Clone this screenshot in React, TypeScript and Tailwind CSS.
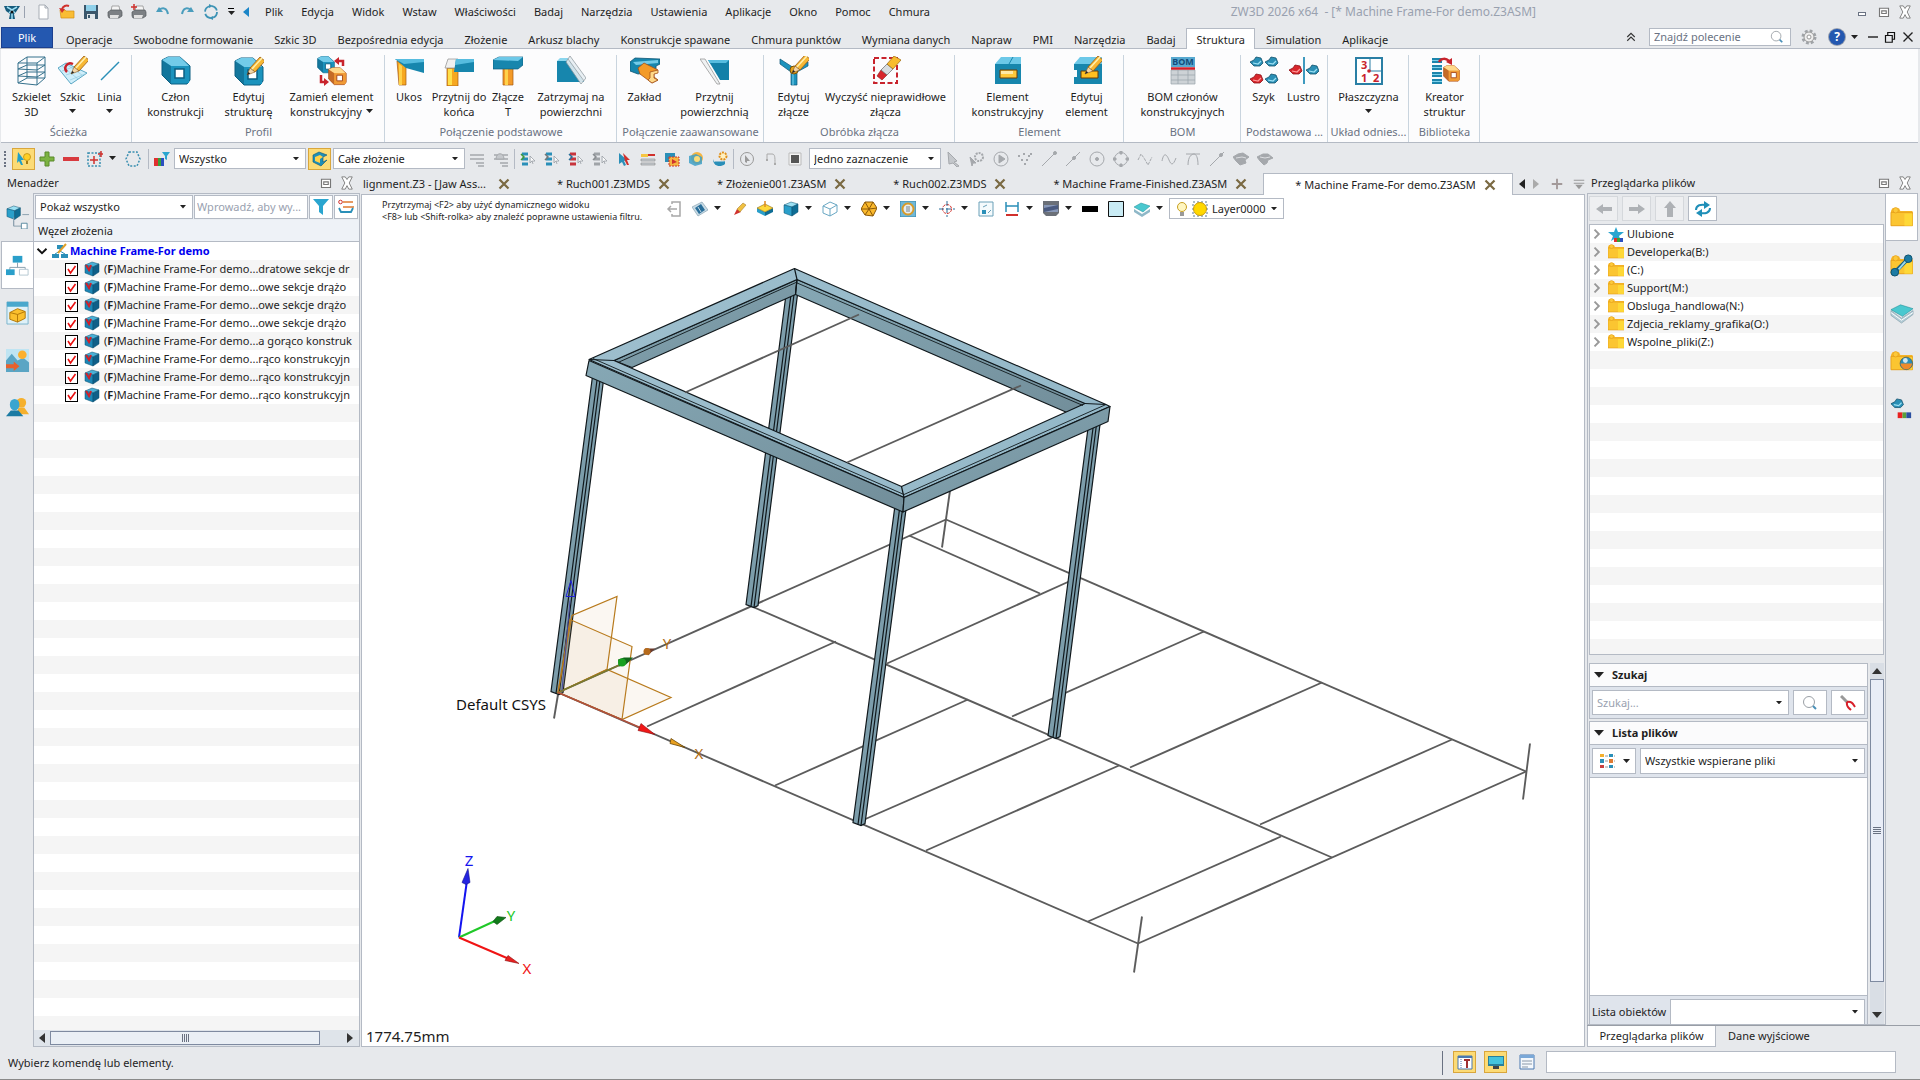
import { ReactNode } from 'react'
import clsx from 'clsx'

type IconProps = { children?: ReactNode; size?: number; className?: string }

// Ribbon drawings use a 30 unit box, toolbar drawings a 16 unit box
function Icon({ children, size = 16, className = 'size-4' }: IconProps) {
  return (
    <svg viewBox={`0 0 ${size} ${size}`} className={clsx('shrink-0', className)} fill="none" aria-hidden="true">
      {children}
    </svg>
  )
}

function Big({ children }: { children: ReactNode }) {
  return (
    <Icon size={30} className="size-[30px]">
      {children}
    </Icon>
  )
}

function Caret({ className = 'w-[7px]' }: { className?: string }) {
  return (
    <svg viewBox="0 0 8 5" className={clsx('shrink-0 pointer-events-none', className)} aria-hidden="true">
      <path d="M0 0H8L4 4.5Z" fill="#222" />
    </svg>
  )
}

function Pencil({ x, y }: { x: number; y: number }) {
  return (
    <g transform={`translate(${x} ${y})`}>
      <path d="M3 -7L13 -18L18 -14L8 -3Z" fill="#f7b733" stroke="#9a5b10" strokeWidth=".8" />
      <path d="M4.500 -5.500L15 -17" stroke="#fff0b0" strokeWidth="1.500" />
      <path d="M0 0L3 -7L8 -3Z" fill="#f3d6a8" stroke="#8a5a20" strokeWidth=".6" />
      <path d="M0 0L1.200 -3L3.200 -1.500Z" fill="#222" />
    </g>
  )
}

function BlueTube({ x = 0, y = 0, s = 1, orange = false }: { x?: number; y?: number; s?: number; orange?: boolean }) {
  const [light, mid, dark] = orange ? ['#ffd98a', '#f09a35', '#a3451a'] : ['#72cbe9', '#1b93bd', '#0c5f82']
  return (
    <g transform={`translate(${x} ${y}) scale(${s})`}>
      <path d="M1 4L7 1H19L29 10V24L26 28H10L1 19Z" fill={mid} stroke={dark} strokeWidth="1" />
      <path d="M1 4L7 1H19L28 10H10Z" fill={light} />
      <path d="M1 4L10 10V28L1 19Z" fill={dark} opacity=".55" />
      <path d="M10 10H28V27H10Z" fill={mid} />
      <path d="M14 13H23V22H14Z" fill="#fff" stroke={dark} strokeWidth="1.500" />
    </g>
  )
}

function Blob({ x, y, red = false }: { x: number; y: number; red?: boolean }) {
  return (
    <g transform={`translate(${x} ${y})`}>
      <path d="M0 5L4 3L6 0L11 1L13 6L10 9L4 9Z" fill={red ? '#d8262c' : '#2a8fb5'} stroke={red ? '#8c1218' : '#11506b'} strokeWidth=".8" />
      <path d="M3 6L8 7L11 4" stroke={red ? '#ff9a9a' : '#9be0f3'} strokeWidth="1.200" />
    </g>
  )
}

function Folder() {
  return (
    <>
      <path d="M0 3L1 1H6L7 3H16V14H0Z" fill="#f9b92c" />
      <path d="M0 4H16V14H0Z" fill="#fbc531" stroke="#e39a17" strokeWidth=".6" />
      <path d="M10 5H16V14H10Z" fill="#ffdf3a" opacity=".7" />
      <circle cx="3.500" cy="2.500" r="2" fill="#fcc93a" stroke="#e39a17" strokeWidth=".5" />
    </>
  )
}

function Cube({ x = 0, y = 0, top = '#9be0f3', left = '#2a9fca', right = '#0e6d95' }) {
  return (
    <g transform={`translate(${x} ${y})`} stroke="#0b4f6e" strokeWidth=".5">
      <path d="M1 4L8 1L15 3L9 6Z" fill={top} />
      <path d="M1 4L9 6V15L1 12Z" fill={left} />
      <path d="M9 6L15 3V11L9 15Z" fill={right} />
    </g>
  )
}

function Lens() {
  return (
    <>
      <circle cx="7" cy="7" r="5.500" stroke="#9aa0a6" />
      <path d="M11 11L14 14" stroke="#4a90b8" strokeWidth="2" />
    </>
  )
}

function CloseGlyph() {
  return (
    <Icon className="size-3">
      <path d="M2 2L14 14M14 2L2 14" stroke="#7b6a43" strokeWidth="3" />
    </Icon>
  )
}

// Float and close controls shared by the window and the docked panels
function PanelControls() {
  return (
    <div className="flex items-center gap-2">
      <button aria-label="Odepnij">
        <Icon className="size-3">
          <path d="M2 3H14V14H2Z" stroke="#777" strokeWidth="1.500" fill="#fff" />
          <path d="M5 6.500H11V10H5Z" stroke="#777" strokeWidth="1.500" />
        </Icon>
      </button>
      <button aria-label="Zamknij">
        <Icon className="size-3.5">
          <path d="M2 1H6L8 4L10 1H14L10.500 8L14 15H10L8 11L6 15H2L5.500 8Z" fill="#fff" stroke="#777" />
        </Icon>
      </button>
    </div>
  )
}

type ComboProps = { label: string; options: string[]; className?: string; muted?: boolean }

function Combo({ label, options, className, muted }: ComboProps) {
  return (
    <div className={clsx('flex items-center border border-[#b4bac4] bg-white pr-1.5', className)}>
      <select
        aria-label={label}
        className={clsx('min-w-0 grow appearance-none bg-transparent pl-1 outline-none', muted && 'text-gray-400')}
      >
        {options.map((o) => (
          <option key={o}>{o}</option>
        ))}
      </select>
      <Caret className="w-[6px]" />
    </div>
  )
}

const menu = ['Plik', 'Edycja', 'Widok', 'Wstaw', 'Właściwości', 'Badaj', 'Narzędzia', 'Ustawienia', 'Aplikacje', 'Okno', 'Pomoc', 'Chmura']

const quickIcons: { name: string; art: ReactNode }[] = [
  { name: 'Nowy', art: <path d="M4 1H10L13 4V15H4ZM10 1V4H13" fill="#fff" stroke="#a7adb5" /> },
  {
    name: 'Otwórz',
    art: (
      <>
        <path d="M1 6H6L7 7H15V14H2Z" fill="#f9bd35" stroke="#d48e12" strokeWidth=".7" />
        <path d="M10 2C7 1 4 2 3 5" stroke="#d0312d" strokeWidth="2" />
        <path d="M0 4L6 5L3 9Z" fill="#d0312d" />
      </>
    ),
  },
  {
    name: 'Zapisz',
    art: (
      <>
        <path d="M1 1H15V15H1Z" fill="#3a566b" />
        <path d="M3 1H13V7H3Z" fill="#8fd0ea" />
        <path d="M4 10H12V15H4Z" fill="#dfe6ea" />
        <path d="M5 11H7V14H5Z" fill="#3a566b" />
      </>
    ),
  },
  {
    name: 'Drukuj',
    art: (
      <>
        <path d="M5 2H12L13 7H4Z" fill="#f4f4f4" stroke="#888" strokeWidth=".7" />
        <path d="M1 8L4 6H14L15 8V12L12 14H2L1 12Z" fill="#7c8084" stroke="#55595d" strokeWidth=".7" />
        <path d="M3 11H12L11 14H3Z" fill="#e2e2e2" />
      </>
    ),
  },
  {
    name: 'Drukuj wiele',
    art: (
      <>
        <path d="M5 2H12L13 7H4Z" fill="#f4f4f4" stroke="#888" strokeWidth=".7" />
        <path d="M1 8L4 6H14L15 8V12L12 14H2L1 12Z" fill="#7c8084" stroke="#55595d" strokeWidth=".7" />
        <path d="M3 11H12L11 14H3Z" fill="#e2e2e2" />
        <path d="M3 0V6M0 3H6" stroke="#d0312d" strokeWidth="1.500" />
      </>
    ),
  },
  {
    name: 'Cofnij',
    art: (
      <>
        <path d="M4 6C8 3 12 4 13 10" stroke="#4a9dbd" strokeWidth="2" />
        <path d="M1 8L4 3L8 8Z" fill="#4a9dbd" />
      </>
    ),
  },
  {
    name: 'Ponów',
    art: (
      <>
        <path d="M12 6C8 3 4 4 3 10" stroke="#4a9dbd" strokeWidth="2" />
        <path d="M15 8L12 3L8 8Z" fill="#4a9dbd" />
      </>
    ),
  },
  {
    name: 'Regeneruj',
    art: (
      <>
        <circle cx="8" cy="8" r="6" stroke="#3d93b5" strokeWidth="1.800" strokeDasharray="7 2.400" />
        <path d="M6 0L10 2L6 4ZM10 12L6 14L10 16Z" fill="#3d93b5" />
      </>
    ),
  },
]

function MenuBar() {
  return (
    <header className="flex h-6 items-center">
      <div className="flex w-[31px] items-center gap-1 pl-1">
        <Icon className="size-4">
          <path d="M0 2H16L12 8L10 10L11 15H5L6 10L2 7Z" fill="#165b7c" />
          <path d="M3 3L8 6L13 3M5 9L8 6L11 9M8 9V15" stroke="#9fe0f5" strokeWidth="1.500" />
          <circle cx="8" cy="8" r="1.500" fill="#111" />
        </Icon>
        <div className="h-3 w-px bg-gray-400" />
      </div>
      {quickIcons.map(({ name, art }) => (
        <button key={name} aria-label={name} className="flex w-6 justify-center">
          <Icon>{art}</Icon>
        </button>
      ))}
      <button aria-label="Więcej" className="flex w-4 flex-col items-center gap-0.5">
        <div className="h-px w-1.5 bg-black" />
        <Caret />
      </button>
      <button aria-label="Zwiń menu" className="ml-1 w-2.5">
        <svg viewBox="0 0 6 10" className="h-2.5 w-1.5">
          <path d="M6 0V10L0 5Z" fill="#1c86c8" />
        </svg>
      </button>
      <nav className="ml-3 flex gap-[18px]">
        {menu.map((m) => (
          <button key={m}>{m}</button>
        ))}
      </nav>
      <div className="grow" />
      <div className="mr-[322px] text-xs whitespace-pre text-gray-400">ZW3D 2026 x64  - [* Machine Frame-For demo.Z3ASM]</div>
      <div className="flex items-center gap-3 pr-2">
        <button aria-label="Minimalizuj">
          <div className="mt-1 h-1 w-2 border border-gray-500 bg-white" />
        </button>
        <PanelControls />
      </div>
    </header>
  )
}

const ribbonTabs = [
  'Operacje',
  'Swobodne formowanie',
  'Szkic 3D',
  'Bezpośrednia edycja',
  'Złożenie',
  'Arkusz blachy',
  'Konstrukcje spawane',
  'Chmura punktów',
  'Wymiana danych',
  'Napraw',
  'PMI',
  'Narzędzia',
  'Badaj',
  'Struktura',
  'Simulation',
  'Aplikacje',
]

function RibbonTabs() {
  return (
    <div className="flex h-[25px] items-end border-b border-[#b4bac4]">
      <button className="ml-px h-[21px] w-[52px] border border-[#1b3f8f] bg-[#2458b0] text-white">Plik</button>
      <nav className="ml-0.5 flex h-5">
        {ribbonTabs.map((t) => (
          <button
            key={t}
            className={clsx(
              'border-x border-t pt-0.5 pr-[9px] pl-2.5 whitespace-nowrap',
              t === 'Struktura' ? '-mb-px h-[21px] border-[#b4bac4] bg-white' : 'h-5 border-transparent',
            )}
          >
            {t}
          </button>
        ))}
      </nav>
      <div className="grow" />
      <div className="flex h-[22px] items-center">
        <button aria-label="Zwiń wstążkę" className="mr-3">
          <Icon className="size-3">
            <path d="M3 8L8 3L13 8M3 13L8 8L13 13" stroke="#333" strokeWidth="1.500" />
          </Icon>
        </button>
        <div className="flex h-[18px] w-[142px] items-center border border-[#b4bac4] bg-white px-1">
          <input aria-label="Znajdź polecenie" placeholder="Znajdź polecenie" className="w-0 grow outline-none placeholder:text-gray-500" />
          <Icon className="mr-0.5 size-3.5">
            <Lens />
          </Icon>
        </div>
        <button aria-label="Opcje" className="ml-2.5">
          <Icon>
            <circle cx="8" cy="8" r="6" stroke="#a0a4a8" strokeWidth="3" strokeDasharray="2.700 2" />
            <circle cx="8" cy="8" r="5" fill="#eee" stroke="#999" />
            <circle cx="8" cy="8" r="2" stroke="#999" fill="#fff" />
          </Icon>
        </button>
        <button aria-label="Pomoc" className="ml-3 flex items-center gap-1.5">
          <div className="flex size-4 items-center justify-center rounded-full bg-[#2458b0] text-xs font-bold text-white ring-1 ring-gray-400">?</div>
          <Caret />
        </button>
        <div className="ml-2.5 flex items-center gap-1.5 pr-1.5">
          <button aria-label="Minimalizuj dokument">
            <Icon className="size-2.5">
              <path d="M0 8H16" stroke="#333" strokeWidth="2.500" />
            </Icon>
          </button>
          <button aria-label="Przywróć dokument">
            <Icon className="size-3">
              <path d="M2 6H11V15H2ZM5 6V2H14V11H11" stroke="#111" strokeWidth="1.600" />
            </Icon>
          </button>
          <button aria-label="Zamknij dokument">
            <Icon className="size-3">
              <path d="M2 2L14 14M14 2L2 14" stroke="#222" strokeWidth="1.800" />
            </Icon>
          </button>
        </div>
      </div>
    </div>
  )
}

type Tool = { lines: string[]; width: string; art: ReactNode; drop?: boolean }
type Group = { title: string; width: string; tools: Tool[] }

const groups: Group[] = [
  {
    title: 'Ścieżka',
    width: 'w-[131px] pl-1',
    tools: [
      {
        lines: ['Szkielet', '3D'],
        width: 'w-11',
        art: (
          <path
            d="M1 7L10 1H28L20 7ZM1 7V27L10 22V1M20 7V29M28 1V22L20 29L1 27M10 22H28M1 13L10 9H28L20 14ZM1 20L10 16H28L20 21Z"
            stroke="#35718c"
          />
        ),
      },
      {
        lines: ['Szkic'],
        width: 'w-[38px]',
        drop: true,
        art: (
          <>
            <path d="M0 12L8 7L29 17L13 28Z" fill="#cfeefa" stroke="#5aa7c4" />
            <path d="M4 15L18 10M8 19L23 14M12 24L27 18M4 10L20 23M8 8L24 19" stroke="#8ac6dc" strokeWidth=".6" />
            <path d="M15 8C9 5 5 12 9 16" stroke="#c8232c" strokeWidth="2.500" />
            <Pencil x={13} y={18} />
          </>
        ),
      },
      { lines: ['Linia'], width: 'w-9', drop: true, art: <path d="M6 24L24 6" stroke="#2a8fb8" strokeWidth="1.500" /> },
    ],
  },
  {
    title: 'Profil',
    width: 'w-[253px]',
    tools: [
      { lines: ['Człon', 'konstrukcji'], width: 'w-[70px]', art: <BlueTube /> },
      {
        lines: ['Edytuj', 'strukturę'],
        width: 'w-[76px]',
        art: (
          <>
            <BlueTube y={1} />
            <Pencil x={13} y={19} />
          </>
        ),
      },
      {
        lines: ['Zamień element', 'konstrukcyjny'],
        width: 'w-[90px]',
        drop: true,
        art: (
          <>
            <BlueTube s={0.6} />
            <BlueTube x={11} y={11} s={0.63} orange />
            <path d="M26 10V5H22M4 19V26H8" stroke="#c8232c" strokeWidth="2.500" />
            <path d="M22 1V9L17 5ZM7 22V30L12 26Z" fill="#c8232c" />
          </>
        ),
      },
    ],
  },
  {
    title: 'Połączenie podstawowe',
    width: 'w-[232px]',
    tools: [
      {
        lines: ['Ukos'],
        width: 'w-[42px]',
        art: (
          <>
            <path d="M3 5L12 10V29H5Z" fill="#f6a821" stroke="#a35a12" strokeWidth=".7" />
            <path d="M5 8L8 10V29H5Z" fill="#ffd24a" />
            <path d="M1 3H30V17L12 12Z" fill="#1786ad" />
            <path d="M1 3H30V6L10 8Z" fill="#56bcdf" />
          </>
        ),
      },
      {
        lines: ['Przytnij do', 'końca'],
        width: 'w-[58px]',
        art: (
          <>
            <path d="M3 12H14V30H3Z" fill="#f6a821" stroke="#a35a12" strokeWidth=".7" />
            <path d="M4 13H8V29H4Z" fill="#ffe04a" />
            <path d="M1 12L4 3H14L12 12Z" fill="#f0f0f0" stroke="#999" strokeWidth=".8" />
            <path d="M12 3H30V16H10Z" fill="#1786ad" />
            <path d="M12 3H30V6L11 9Z" fill="#56bcdf" />
          </>
        ),
      },
      {
        lines: ['Złącze', 'T'],
        width: 'w-10',
        art: (
          <>
            <path d="M10 11H20V29H10Z" fill="#f39a28" stroke="#a35a12" strokeWidth=".7" />
            <path d="M12 11H15V29H12Z" fill="#ffd24a" />
            <path d="M0 4L6 1H30V9L25 13H0Z" fill="#1786ad" stroke="#0d5d7e" strokeWidth=".7" />
            <path d="M0 4L6 1H30L25 5Z" fill="#6cc8e8" />
          </>
        ),
      },
      {
        lines: ['Zatrzymaj na', 'powierzchni'],
        width: 'w-[86px]',
        art: (
          <>
            <path d="M1 5H14L28 26H1Z" fill="#1786ad" />
            <path d="M1 5L4 2H12L14 5Z" fill="#8ad6ee" />
            <path d="M10 6L14 0L30 22L25 28Z" fill="#e6eef2" stroke="#8b969c" strokeWidth=".8" opacity=".9" />
            <path d="M12 3L28 25" stroke="#8b969c" strokeWidth=".7" />
          </>
        ),
      },
    ],
  },
  {
    title: 'Połączenie zaawansowane',
    width: 'w-[147px]',
    tools: [
      {
        lines: ['Zakład'],
        width: 'w-12',
        art: (
          <>
            <path d="M0 6L5 2L30 3V8L26 10V16L8 18L0 15Z" fill="#1786ad" stroke="#0c5575" strokeWidth=".8" />
            <path d="M3 6L28 4V7L6 9Z" fill="#73cbe8" />
            <path d="M8 12L14 7L28 14L24 17V21L28 24L22 27L10 18Z" fill="#f39a28" stroke="#a3501a" strokeWidth=".8" />
            <path d="M20 16L28 14V17L24 18V22L28 24L22 27L18 24L20 22Z" fill="#ffd98a" stroke="#a3501a" strokeWidth=".8" />
          </>
        ),
      },
      {
        lines: ['Przytnij', 'powierzchnią'],
        width: 'w-[92px]',
        art: (
          <>
            <path d="M8 4H29V24H20Z" fill="#1380a8" />
            <path d="M8 4H29L26 7H10Z" fill="#56bcdf" />
            <path d="M0 3H5L20 28H17Z" fill="#f0f2f3" stroke="#999" strokeWidth=".8" />
          </>
        ),
      },
    ],
  },
  {
    title: 'Obróbka złącza',
    width: 'w-[191px]',
    tools: [
      {
        lines: ['Edytuj', 'złącze'],
        width: 'w-[52px]',
        art: (
          <>
            <path d="M1 3L15 12L29 6V10L18 16V29H12V16L1 8Z" fill="#1c93bd" stroke="#0c5575" strokeWidth=".7" />
            <path d="M14 16V29" stroke="#7fd2ec" />
            <circle cx="15" cy="14" r="4" fill="#e5a51d" stroke="#7d5208" />
            <Pencil x={13} y={17} />
          </>
        ),
      },
      {
        lines: ['Wyczyść nieprawidłowe', 'złącza'],
        width: 'w-[132px]',
        art: (
          <>
            <path d="M3 2H26V27H3Z" stroke="#c8232c" strokeWidth="2" strokeDasharray="5 2.500" />
            <path d="M6 20L10 14L16 19L11 24Z" fill="#d7262c" stroke="#8b1519" strokeWidth=".6" />
            <path d="M10 14L16 8L22 13L16 19Z" fill="#d8dde0" stroke="#666" strokeWidth=".7" />
            <path d="M16 8L23 0L30 4L22 13Z" fill="#f8bc2e" stroke="#9a6510" strokeWidth=".7" />
          </>
        ),
      },
    ],
  },
  {
    title: 'Element',
    width: 'w-[169px]',
    tools: [
      {
        lines: ['Element', 'konstrukcyjny'],
        width: 'w-[94px]',
        art: (
          <>
            <path d="M2 8H28V28H2Z" fill="#1786ad" />
            <path d="M2 8L8 1H28V8Z" fill="#6cc8e8" />
            <path d="M20 1L16 8" stroke="#1786ad" />
            <path d="M7 14H24V22H7Z" fill="#ffc83a" stroke="#6b3c08" />
            <path d="M8 15H20V18H8Z" fill="#ffe9a5" />
          </>
        ),
      },
      {
        lines: ['Edytuj', 'element'],
        width: 'w-16',
        art: (
          <>
            <path d="M2 8H30V28H2V21H5V14H2Z" fill="#1786ad" />
            <path d="M2 8L8 1H30V8Z" fill="#6cc8e8" />
            <path d="M9 15H26V22H9Z" fill="#ffc020" stroke="#6b3c08" />
            <Pencil x={13} y={18} />
          </>
        ),
      },
    ],
  },
  {
    title: 'BOM',
    width: 'w-[117px]',
    tools: [
      {
        lines: ['BOM członów', 'konstrukcyjnych'],
        width: 'w-[110px]',
        art: (
          <>
            <path d="M3 1H27V11H3Z" fill="#57a9d0" />
            <text x="15" y="9" textAnchor="middle" fontSize="9" fontWeight="700" fill="#134d7c">
              BOM
            </text>
            <path d="M3 14H27V28H3Z" fill="#cdd2d6" stroke="#9aa3a9" strokeWidth=".7" />
            <path d="M3 19H27M3 24H27M10 14V28M20 14V28" stroke="#9aa3a9" strokeWidth=".7" />
            <path d="M3 12.500H27" stroke="#d0202a" strokeWidth="2.500" />
          </>
        ),
      },
    ],
  },
  {
    title: 'Podstawowa ...',
    width: 'w-[87px]',
    tools: [
      {
        lines: ['Szyk'],
        width: 'w-[38px]',
        art: (
          <>
            <Blob x={1} y={1} />
            <Blob x={16} y={1} />
            <Blob x={1} y={18} red />
            <Blob x={16} y={18} />
          </>
        ),
      },
      {
        lines: ['Lustro'],
        width: 'w-[42px]',
        art: (
          <>
            <Blob x={0} y={9} red />
            <Blob x={17} y={9} />
            <path d="M15 1V28" stroke="#2a8fb8" strokeWidth="1.800" />
          </>
        ),
      },
    ],
  },
  {
    title: 'Układ odnies...',
    width: 'w-[81px]',
    tools: [
      {
        lines: ['Płaszczyzna'],
        width: 'w-[74px]',
        drop: true,
        art: (
          <>
            <path d="M2 2H28V28H2Z" fill="#fff" stroke="#2a7fa5" strokeWidth="2" />
            <path d="M16 3V15H28" stroke="#2a7fa5" />
            <circle cx="15" cy="15" r="1.800" fill="#c8232c" />
            <g fontSize="11" fontWeight="700" fill="#c8232c">
              <text x="7" y="13">3</text>
              <text x="7" y="26">1</text>
              <text x="19" y="26">2</text>
            </g>
          </>
        ),
      },
    ],
  },
  {
    title: 'Biblioteka',
    width: 'w-[71px]',
    tools: [
      {
        lines: ['Kreator', 'struktur'],
        width: 'w-14',
        art: (
          <>
            <path d="M2 2H12V7H2ZM2 9H12V14H2ZM2 16H12V21H2ZM2 23H12V28H2Z" fill="#1c86ad" />
            <path d="M2 4.500H12M2 11.500H12M2 18.500H12M2 25.500H12" stroke="#7fd2ec" />
            <path d="M9 6C11 2 16 2 19 5" stroke="#c8232c" strokeWidth="2.500" />
            <path d="M22 2V9L16 6Z" fill="#c8232c" />
            <BlueTube x={13} y={9} s={0.58} orange />
          </>
        ),
      },
    ],
  },
]

function Ribbon() {
  return (
    <div className="mr-0.5 ml-px flex h-[94px] border-b border-[#b4bac4] bg-[#fcfcfd]">
      {groups.map((g) => (
        <div key={g.title} className="flex shrink-0">
          <section className={clsx('flex flex-col items-center pt-[7px]', g.width)}>
            <div className="flex h-[68px] w-full justify-center">
              {g.tools.map((t) => (
                <button key={t.lines.join()} className={clsx('flex flex-col items-center leading-[15px] whitespace-nowrap', t.width)}>
                  <Big>{t.art}</Big>
                  <div className="mt-[3px]">{t.lines[0]}</div>
                  <div className="flex h-[15px] items-center gap-1">
                    {t.lines[1]}
                    {t.drop && <Caret />}
                  </div>
                </button>
              ))}
            </div>
            <h2 className="whitespace-nowrap text-gray-500">{g.title}</h2>
          </section>
          <div className="-ml-px mt-1.5 w-px bg-[#c9d4de]" />
        </div>
      ))}
    </div>
  )
}

function Divider() {
  return <div className="mx-px h-5 w-px shrink-0 bg-[#b4bac4]" />
}

function listIcon(color: string, arrow: string) {
  return (
    <>
      <path d="M2 3H8M2 8H8M2 13H8" stroke={color} strokeWidth="3" />
      <path d="M1 3L4 6L1 9" stroke={arrow} strokeWidth="1.500" />
      <path d="M10 5L15 10H12L13 13" fill="#fff" stroke="#9aa0a6" strokeWidth=".8" />
      <path d="M10 5V12L12 10" stroke="#9aa0a6" strokeWidth=".8" />
    </>
  )
}

const filterIcons: ReactNode[] = [
  listIcon('#2a8fb8', '#3f9a3a'),
  listIcon('#2a8fb8', '#777'),
  listIcon('#c8343c', '#2a6f9a'),
  listIcon('#a0a4a8', '#8a8e92'),
  <>
    <path d="M3 2L11 9L8 10L10 14L8 15L6 11L3 13Z" fill="#2a8fb8" />
    <path d="M7 2L14 9L11 9L13 14L11 14L9 10Z" fill="#d0312d" />
  </>,
  <>
    <path d="M1 3H15V5H1Z" fill="#d0312d" />
    <path d="M1 3H8V6H1Z" fill="#f5c542" />
    <path d="M1 8H15V10H1ZM1 12H15V14H1Z" fill="#c9cfd4" stroke="#888" strokeWidth=".6" />
  </>,
  <>
    <path d="M1 2H11V11H1Z" fill="#2a8fb8" />
    <path d="M5 6H15V15H5Z" fill="#f5b542" stroke="#d0312d" strokeDasharray="2 1" />
    <path d="M8 8L13 11L8 13Z" fill="#d0312d" />
  </>,
  <>
    <circle cx="9" cy="7" r="6" fill="#f5b542" />
    <path d="M1 5L8 3L14 6V13L7 15L1 12Z" fill="#3ea0c8" opacity=".85" />
    <circle cx="9" cy="8" r="3" fill="#fbdc7a" />
  </>,
  <>
    <path d="M1 8C2 13 8 14 13 10V13C8 17 1 15 1 8Z" fill="#2a8fb8" />
    <path d="M3 12H12" stroke="#2a8fb8" strokeWidth="3" />
    <circle cx="11" cy="5" r="3.500" fill="#fff0c0" stroke="#e0901a" strokeWidth="2" strokeDasharray="2 1" />
  </>,
]

const snapIcons: ReactNode[] = [
  <path d="M3 1L12 10L9 11L14 15L12 16L8 12L4 13Z" fill="#c4c7cb" />,
  <>
    <circle cx="10" cy="6" r="4" stroke="#a5a8ac" strokeWidth="2" strokeDasharray="2 1" />
    <path d="M1 6L7 12L4 12L3 15Z" fill="#a5a8ac" />
  </>,
  <>
    <circle cx="8" cy="8" r="7" />
    <path d="M6 4L12 8L6 12Z" fill="#a5a8ac" />
  </>,
  <path d="M1 5H3M6 3H8M11 5H13M4 9H6M9 9H11M13 3H15M7 13H9" strokeWidth="2" />,
  <>
    <path d="M1 15L13 3" />
    <circle cx="14" cy="2" r="1.500" fill="#a5a8ac" />
  </>,
  <>
    <path d="M1 15L15 1" />
    <circle cx="9" cy="7" r="1.500" fill="#a5a8ac" />
  </>,
  <>
    <circle cx="8" cy="8" r="7" />
    <circle cx="8" cy="8" r="1.500" fill="#a5a8ac" />
  </>,
  <>
    <circle cx="8" cy="8" r="6.500" />
    <path d="M7 0H9V3H7ZM7 13H9V16H7ZM0 7H3V9H0ZM13 7H16V9H13Z" fill="#a5a8ac" />
  </>,
  <path d="M1 9L4 3L7 7L11 14L15 6" strokeDasharray="3 1" />,
  <path d="M1 10C3 0 6 4 8 9S12 15 15 7" />,
  <path d="M1 3H15M3 14C3 5 7 3 9 3S13 6 13 14" />,
  <>
    <path d="M1 15L15 1" />
    <circle cx="12" cy="4" r="1.500" fill="#a5a8ac" />
  </>,
  <>
    <path d="M0 6L5 3L10 2L16 6L12 9L13 12L7 14L3 10Z" fill="#a5a8ac" />
    <path d="M3 7L9 6L13 7" stroke="#dcdee1" />
  </>,
  <>
    <path d="M0 6L6 3L11 3L16 7L11 9L10 12L7 14L3 10Z" fill="#a5a8ac" />
    <path d="M3 6L8 7L13 6" stroke="#dcdee1" />
  </>,
]

function SelectionToolbar() {
  return (
    <div className="flex h-[27px] items-center pt-1">
      <div className="mr-1.5 ml-1 h-4 border-l-2 border-dotted border-gray-500" />
      <button aria-label="Wybierz" className="flex h-[22px] w-[23px] items-center justify-center border border-[#d9a63c] bg-[#fcdb76]">
        <Icon>
          <path d="M2 1L8 9L5 9L7 14L5 14L3 10L1 12Z" fill="#1f9fc8" />
          <circle cx="11" cy="6" r="3.500" fill="#ffcf24" stroke="#b8860b" strokeWidth=".7" />
          <path d="M10 10H12V13H10Z" fill="#a67a10" />
        </Icon>
      </button>
      <button aria-label="Dodaj" className="flex w-6 justify-center">
        <Icon>
          <path d="M6 1H10V6H15V10H10V15H6V10H1V6H6Z" fill="#7cb342" stroke="#5a8a2a" />
        </Icon>
      </button>
      <button aria-label="Usuń" className="flex w-6 justify-center">
        <Icon>
          <path d="M0 6H16V10H0Z" fill="#d83a3f" />
        </Icon>
      </button>
      <button aria-label="Zaznacz oknem" className="flex w-9 items-center gap-1.5 pl-1">
        <Icon>
          <path d="M1 2H13V15H1Z" stroke="#3a8fb0" strokeWidth="1.500" strokeDasharray="2 1.500" />
          <path d="M7 5V13M3 9H11M14 0V6M11 3H16" stroke="#d0312d" strokeWidth="1.500" />
        </Icon>
        <Caret />
      </button>
      <button aria-label="Wielobok" className="flex w-7 justify-center">
        <Icon>
          <path d="M4 1H12L15 8L12 15H4L1 8Z" stroke="#3a8fb0" strokeWidth="1.500" strokeDasharray="2 1.500" />
        </Icon>
      </button>
      <Divider />
      <button aria-label="Filtr kolorów" className="flex w-6 justify-center">
        <Icon>
          <path d="M0 7H4V15H0Z" fill="#e03030" />
          <path d="M4 7H7V15H4Z" fill="#39a03a" />
          <path d="M7 7H10V15H7Z" fill="#2a4fc0" />
          <path d="M8 1H16L13 5V9L11 8V5Z" fill="#2aa5cf" />
        </Icon>
      </button>
      <Combo label="Filtr" options={['Wszystko']} className="h-[21px] w-[132px]" />
      <button aria-label="Zakres" className="mx-0.5 flex h-[22px] w-[23px] items-center justify-center border border-[#d9a63c] bg-[#fcdb76]">
        <Icon>
          <path d="M1 4L7 1L15 4L11 6V11L15 9L9 15L1 11Z" fill="#1f8fb8" stroke="#0c5575" strokeWidth=".6" />
          <path d="M3 6L8 4L11 6L8 8V12L3 10Z" fill="#ffd24a" />
        </Icon>
      </button>
      <Combo label="Zakres wyboru" options={['Całe złożenie']} className="h-[21px] w-[132px]" />
      {[0, 1].map((i) => (
        <button key={i} aria-label="Wyrównanie" className="flex w-6 justify-center">
          <Icon>
            <path d="M1 4H15M1 8H15M7 12H15M9 15H15" stroke="#a5a8ac" strokeWidth="1.500" />
            {i === 1 && <path d="M3 8C3 1 11 1 11 8Z" fill="#c5c8cc" stroke="#a5a8ac" />}
          </Icon>
        </button>
      ))}
      <Divider />
      {filterIcons.map((art, i) => (
        <button key={i} aria-label={`Filtr ${i + 1}`} className="flex w-6 justify-center">
          <Icon>{art}</Icon>
        </button>
      ))}
      <Divider />
      <button aria-label="Tryb wskazania" className="flex w-6 justify-center">
        <Icon>
          <circle cx="8" cy="8" r="6.500" stroke="#999" />
          <path d="M6 4L11 10H8V12L6 11Z" fill="#999" />
        </Icon>
      </button>
      <button aria-label="Łańcuch" className="flex w-6 justify-center">
        <Icon>
          <path d="M4 9V3H9C12 3 12 6 12 13" stroke="#aaa" />
          <path d="M3 8H5V10H3ZM11 12H13V14H11Z" fill="#aaa" />
        </Icon>
      </button>
      <button aria-label="Wypełnienie" className="flex w-6 justify-center">
        <Icon>
          <path d="M2 2H14V14H2Z" fill="#f4f4f4" stroke="#bbb" />
          <path d="M4 4H12V12H4Z" fill="#555" />
        </Icon>
      </button>
      <Combo label="Tryb zaznaczania" options={['Jedno zaznaczenie']} className="ml-0.5 h-[21px] w-[132px]" />
      {snapIcons.map((art, i) => (
        <button key={i} aria-label={`Przyciąganie ${i + 1}`} className="flex w-6 justify-center">
          <Icon>
            <g stroke="#a5a8ac">{art}</g>
          </Icon>
        </button>
      ))}
    </div>
  )
}

const parts = [
  'dratowe sekcje dr',
  'owe sekcje drążo',
  'owe sekcje drążo',
  'owe sekcje drążo',
  'a gorąco konstruk',
  'rąco konstrukcyjn',
  'rąco konstrukcyjn',
  'rąco konstrukcyjn',
]

const managerTabs: ReactNode[] = [
  <>
    <Cube />
    <path d="M17 10H24M8 16V22H16M8 13V22" stroke="#8aa0ad" />
    <path d="M16 19H22V25H16Z" stroke="#5a8aa0" fill="#fff" />
  </>,
  <>
    <path d="M12 10V15M4 19V15H20V19" stroke="#8aa0ad" />
    <path d="M7 3H17V10H7Z" fill="#2a9fca" />
    <path d="M0 17H9V23H0Z" fill="#2a9fca" />
    <path d="M14 17H23V23H14Z" fill="#fff" stroke="#b5c8d2" />
  </>,
  <>
    <path d="M1 1H23V24H1Z" fill="#dff1f8" stroke="#7ab4cc" />
    <path d="M1 1H23V6H1Z" fill="#4aa8cc" />
    <path d="M4 12L12 8L20 11V18L12 22L4 19Z" fill="#fbc02d" stroke="#b27708" />
    <path d="M4 12L12 14L20 11M12 14V22" stroke="#b27708" />
  </>,
  <>
    <path d="M0 0H24V24H0Z" fill="#bfe4f2" />
    <path d="M0 12L6 5L12 12L18 9L24 14V24H0Z" fill="#5aa5c4" />
    <circle cx="17" cy="6" r="4.500" fill="#fbb02d" />
    <path d="M0 16H8V13L14 18L8 23V20H0Z" fill="#e8602c" />
  </>,
  <>
    <circle cx="16" cy="6" r="5" fill="#f5b02d" />
    <path d="M11 18L13 11H19L24 18Z" fill="#f5b02d" />
    <ellipse cx="9" cy="8" rx="5" ry="6" fill="#3aa5cf" />
    <path d="M0 20L5 14H13L18 20Z" fill="#1c7ba3" />
  </>,
]

function SideTabs({ items, active, side }: { items: ReactNode[]; active: number; side: 'left' | 'right' }) {
  return (
    <div className="flex w-8 shrink-0 flex-col">
      {items.map((art, i) => (
        <button
          key={i}
          aria-label={`Karta ${i + 1}`}
          className={clsx(
            'flex h-12 items-center justify-center border-y',
            side === 'left' ? 'border-l' : 'border-r',
            i === active ? 'border-[#b4bac4] bg-white' : 'border-transparent',
          )}
        >
          <Icon size={25} className="size-6">
            {art}
          </Icon>
        </button>
      ))}
    </div>
  )
}

const stripes = 'bg-[repeating-linear-gradient(to_bottom,#fff_0,#fff_18px,#f5f5f5_18px,#f5f5f5_36px)]'

function Manager() {
  return (
    <aside className="flex w-[360px] shrink-0 flex-col pl-px">
      <div className="flex h-[23px] items-center justify-between pt-0.5 pr-1.5 pl-1.5">
        <h2>Menadżer</h2>
        <PanelControls />
      </div>
      <div className="flex min-h-0 grow">
        <SideTabs items={managerTabs} active={1} side="left" />
        <div className="flex min-w-0 grow flex-col border border-[#b4bac4] bg-white">
          <div className="flex h-[26px] gap-px bg-[#e9edf2] p-px">
            <Combo label="Pokaż" options={['Pokaż wszystko']} className="w-[158px]" />
            <input
              aria-label="Szukaj w drzewie"
              placeholder="Wprowadź, aby wy..."
              className="w-0 grow border border-[#b4bac4] bg-white px-0.5 outline-none placeholder:text-gray-400"
            />
            <button aria-label="Filtruj" className="flex w-6 items-center justify-center border border-[#b4bac4] bg-white">
              <Icon>
                <path d="M0 0H16L10 7V16L6 13V7Z" fill="#2aa5cf" />
              </Icon>
            </button>
            <button aria-label="Ustawienia drzewa" className="flex w-6 items-center justify-center border border-[#b4bac4] bg-white">
              <Icon>
                <circle cx="2.500" cy="3" r="1.800" stroke="#d0312d" />
                <path d="M5 3H15M5 8H16" stroke="#e07a30" strokeWidth="1.500" />
                <path d="M1 9L3 13H13L15 9" stroke="#2a8fb8" strokeWidth="1.800" />
              </Icon>
            </button>
          </div>
          <div className="h-[22px] border-b border-[#b4bac4] bg-[#eef2f7] pl-1 leading-[21px]">Węzeł złożenia</div>
          <div className={clsx('grow overflow-hidden', stripes)}>
            <div className="flex h-[18px] items-center pl-0.5 font-bold text-[#0000f0]">
              <Icon className="size-3">
                <path d="M2 5L8 11L14 5" stroke="#111" strokeWidth="2.500" />
              </Icon>
              <Icon className="mr-0.5 ml-1 size-4">
                <path d="M5 2H11V6H5ZM0 11H7V15H0ZM9 11H16V15H9Z" fill="#2a8fb8" />
                <path d="M8 6V9M3 11L8 8L13 11" stroke="#2a8fb8" />
                <path d="M6 10L14 1" stroke="#e0a02a" strokeWidth="2" />
              </Icon>
              <span>Machine Frame-For demo</span>
            </div>
            {parts.map((p, i) => (
              <label key={i} className="flex h-[18px] items-center pl-[31px] whitespace-nowrap">
                <span className="grid shrink-0">
                  <input
                    type="checkbox"
                    defaultChecked
                    className="peer col-start-1 row-start-1 size-[13px] appearance-none border border-black bg-white"
                  />
                  <svg viewBox="0 0 13 13" className="invisible col-start-1 row-start-1 size-[13px] peer-checked:visible" aria-hidden="true">
                    <path d="M3 6L5.500 10L10.500 3" stroke="#e81010" strokeWidth="1.600" fill="none" />
                  </svg>
                </span>
                <Icon className="ml-1.5 size-4">
                  <Cube left="#1c86b5" right="#0f5f88" top="#4ab0d6" />
                  <path d="M2 4L5 9L7 4" stroke="#d0202a" strokeWidth="2" />
                </Icon>
                <span className="ml-1">
                  (<b>F</b>)Machine Frame-For demo...{p}
                </span>
              </label>
            ))}
          </div>
          <div className="flex h-4 items-center bg-[#dfe4ea]">
            <div className="flex w-4 justify-center">
              <svg viewBox="0 0 6 10" className="h-2.5 w-1.5">
                <path d="M6 0V10L0 5Z" fill="#333" />
              </svg>
            </div>
            <div className="flex h-3.5 w-[270px] items-center justify-center gap-px border border-[#7e8aa0] bg-[#eaeff5]">
              {[0, 1, 2, 3].map((n) => (
                <div key={n} className="h-2 w-px bg-gray-500" />
              ))}
            </div>
            <div className="flex grow justify-end pr-1.5">
              <svg viewBox="0 0 6 10" className="h-2.5 w-1.5">
                <path d="M0 0V10L6 5Z" fill="#333" />
              </svg>
            </div>
          </div>
        </div>
      </div>
    </aside>
  )
}

const docs = ['* Ruch001.Z3MDS', '* Złożenie001.Z3ASM', '* Ruch002.Z3MDS', '* Machine Frame-Finished.Z3ASM', '* Machine Frame-For demo.Z3ASM']

function DocTabs() {
  return (
    <div className="flex h-[25px] items-end">
      <div className="flex h-[22px] items-center gap-3 border-b border-[#b4bac4] pr-4 pl-0.5">
        <span className="whitespace-nowrap">lignment.Z3 - [Jaw Ass...</span>
        <button aria-label="Zamknij kartę">
          <CloseGlyph />
        </button>
      </div>
      {docs.map((d, i) => (
        <div
          key={d}
          className={clsx(
            'flex h-[22px] items-center gap-2 pr-4 pl-[31px] whitespace-nowrap',
            i === docs.length - 1 ? 'border-x border-t border-[#b4bac4] bg-white' : 'border-b border-[#b4bac4]',
          )}
        >
          <button>{d}</button>
          <button aria-label={`Zamknij ${d}`}>
            <CloseGlyph />
          </button>
        </div>
      ))}
      <div className="flex h-[22px] grow items-center gap-2 border-b border-[#b4bac4] pl-1.5">
        <svg viewBox="0 0 6 10" className="h-2.5 w-1.5 shrink-0">
          <path d="M6 0V10L0 5Z" fill="#222" />
        </svg>
        <svg viewBox="0 0 6 10" className="h-2.5 w-1.5 shrink-0">
          <path d="M0 0V10L6 5Z" fill="#aaa" />
        </svg>
        <Icon className="ml-1 size-3">
          <path d="M8 1V15M1 8H15" stroke="#a39a9a" strokeWidth="2.500" />
        </Icon>
        <Icon className="ml-0.5 size-3">
          <path d="M1 3H15M1 7H15" stroke="#999" strokeWidth="1.500" />
          <path d="M3 9H13L8 15Z" fill="#999" />
        </Icon>
      </div>
    </div>
  )
}

type ViewTool = { name: string; width: string; drop?: boolean; art: ReactNode }

const viewTools: ViewTool[] = [
  {
    name: 'Wyjdź',
    width: 'w-[26px]',
    art: <path d="M6 3V1H14V15H6V13M2 8H11M5 5L2 8L5 11" stroke="#a8a8a8" strokeWidth="1.500" />,
  },
  {
    name: 'Widoki',
    width: 'w-[39px]',
    drop: true,
    art: (
      <>
        <path d="M0 6L10 1L16 9L6 15Z" fill="#c8dbe6" stroke="#7a98a8" strokeWidth=".6" />
        <path d="M3 7L9 3L13 9L7 13Z" fill="#2a6f9a" />
        <path d="M6 6L9 11" stroke="#c8dbe6" />
      </>
    ),
  },
  {
    name: 'Rysuj',
    width: 'w-[26px]',
    art: (
      <>
        <path d="M3 14L6 8L10 11Z" fill="#d0312d" />
        <path d="M6 8L12 2L15 4L9 11Z" fill="#f0c040" stroke="#9a7020" strokeWidth=".5" />
      </>
    ),
  },
  {
    name: 'Płaszczyzna odniesienia',
    width: 'w-[26px]',
    art: (
      <>
        <path d="M0 7L8 11V15L0 11Z" fill="#2a9fca" />
        <path d="M8 11L16 7V11L8 15Z" fill="#0e6d95" />
        <path d="M0 7L8 3L16 7L8 11Z" fill="#ffd93a" stroke="#8a6a10" strokeWidth=".6" />
        <path d="M8 0V6" stroke="#e08a20" strokeWidth="1.500" />
      </>
    ),
  },
  { name: 'Cieniowanie', width: 'w-[39px]', drop: true, art: <Cube /> },
  {
    name: 'Krawędzie',
    width: 'w-[39px]',
    drop: true,
    art: <path d="M1 5L8 1L15 4V11L8 15L1 12ZM1 5L8 8L15 4M8 8V15" stroke="#6aa8c4" />,
  },
  {
    name: 'Materiał',
    width: 'w-[39px]',
    drop: true,
    art: (
      <>
        <path d="M4 1H12L16 7L12 15L4 14L0 8Z" fill="#fbb92c" stroke="#8a5808" />
        <path d="M4 1L8 8L16 7M8 8L4 14M8 8L12 15M0 8L8 8L12 1" stroke="#8a5808" />
      </>
    ),
  },
  {
    name: 'Powiększ',
    width: 'w-[39px]',
    drop: true,
    art: (
      <>
        <path d="M0 0H16V16H0Z" fill="#6fb8d8" stroke="#3a86a8" />
        <circle cx="8" cy="8" r="5.500" fill="#e8eef0" stroke="#d89a28" strokeWidth="2" />
        <path d="M6 5H10V11H6Z" fill="#b0b8bc" />
      </>
    ),
  },
  {
    name: 'Środek obrotu',
    width: 'w-[39px]',
    drop: true,
    art: (
      <>
        <circle cx="8" cy="8" r="4.500" stroke="#d0312d" strokeDasharray="3 1" />
        <path d="M8 0V16M0 8H16" stroke="#2a6f9a" strokeDasharray="5 2" />
      </>
    ),
  },
  {
    name: 'Kadr',
    width: 'w-[26px]',
    art: (
      <>
        <path d="M1 1H15V15H1Z" fill="#f4fafc" stroke="#6aa0b8" />
        <path d="M4 9H8V13H4Z" fill="#2a8fb8" />
        <path d="M5 6L9 4M10 12L13 9" stroke="#6aa0b8" />
      </>
    ),
  },
  {
    name: 'Wymiary',
    width: 'w-[39px]',
    drop: true,
    art: (
      <>
        <path d="M2 1V11M14 1V11M2 5H14" stroke="#2a8fb8" strokeWidth="1.500" />
        <path d="M2 14H14" stroke="#d0312d" strokeWidth="2" />
      </>
    ),
  },
  {
    name: 'Ekran',
    width: 'w-[39px]',
    drop: true,
    art: (
      <>
        <path d="M0 0H16V12L13 15H3L0 12Z" fill="#6b7078" />
        <path d="M1 4H15V11H1Z" fill="#8898b8" />
        <path d="M1 7L15 4V8L1 11Z" fill="#4a5a80" />
      </>
    ),
  },
  { name: 'Kolor linii', width: 'w-[26px]', art: <path d="M0 5H16V11H0Z" fill="#000" /> },
  { name: 'Kolor tła', width: 'w-[26px]', art: <path d="M.5 .5H15.500V15.500H.5Z" fill="#c9ebf4" stroke="#111" /> },
  {
    name: 'Warstwy',
    width: 'w-[35px]',
    drop: true,
    art: (
      <>
        <path d="M0 8L8 13L16 8V11L8 16L0 11Z" fill="#8fb8c8" />
        <path d="M0 6L7 2L16 5L9 11Z" fill="#4ac8cf" stroke="#1f8f98" strokeWidth=".5" />
      </>
    ),
  },
]

function ViewToolbar() {
  return (
    <div className="flex h-[27px] shrink-0 pl-5">
      <p className="w-[284px] pt-1 text-[9px] leading-3 whitespace-nowrap">
        Przytrzymaj &lt;F2&gt; aby użyć dynamicznego widoku
        <br />
        &lt;F8&gt; lub &lt;Shift-rolka&gt; aby znaleźć poprawne ustawienia filtru.
      </p>
      <div className="flex items-center">
        {viewTools.map((t) => (
          <button key={t.name} aria-label={t.name} className={clsx('flex shrink-0 items-center gap-1.5', t.width)}>
            <Icon>{t.art}</Icon>
            {t.drop && <Caret />}
          </button>
        ))}
        <div className="flex h-[21px] w-[115px] items-center gap-0.5 border border-[#b4bac4] pr-1.5 pl-1">
          <Icon>
            <circle cx="8" cy="6" r="4.500" fill="#fff6c0" stroke="#c8a020" />
            <path d="M6 11H10V15H6Z" fill="#999" />
          </Icon>
          <Icon>
            <path d="M1 1H15V15H1Z" fill="#fff" stroke="#5a7a88" strokeDasharray="2 2" />
            <circle cx="8" cy="8" r="6.500" fill="#ffd800" stroke="#c89a10" />
          </Icon>
          <select aria-label="Warstwa" className="w-0 grow appearance-none pl-0.5 outline-none">
            <option>Layer0000</option>
          </select>
          <Caret className="w-[6px]" />
        </div>
      </div>
    </div>
  )
}

// Sketch segments on the floor and on the top frame, as x1 y1 x2 y2
const floorLines = [
  [558, 692, 946, 519],
  [946, 519, 1526, 771],
  [1526, 771, 1138, 943],
  [1138, 943, 558, 692],
  [752, 606, 1332, 857],
  [950, 490, 942, 547],
  [1530, 743, 1523, 799],
  [1142, 916, 1134, 972],
  [558, 694, 554, 718],
  [909, 535, 1040, 593],
  [887, 663, 1069, 581],
  [1012, 716, 1204, 631],
  [1130, 767, 1322, 682],
  [1260, 824, 1452, 739],
  [862, 820, 1052, 737],
  [926, 850, 1119, 765],
  [1088, 921, 1281, 836],
  [775, 785, 968, 699],
  [647, 726, 836, 641],
]

const topLines = [
  [685, 392, 859, 314],
  [847, 462, 1021, 385],
]

function Lines({ data }: { data: number[][] }) {
  return (
    <g stroke="#5c5c5c" strokeWidth="1.900">
      {data.map(([x1, y1, x2, y2]) => (
        <line key={`${x1}-${y1}-${x2}`} x1={x1} y1={y1} x2={x2} y2={y2} />
      ))}
    </g>
  )
}

function Leg({ top, bottom }: { top: [number, number]; bottom: [number, number] }) {
  const [tx, ty] = top
  const [bx, by] = bottom
  return (
    <g stroke="#10181c" strokeWidth="1.200">
      <path d={`M${tx} ${ty}H${tx + 11.5}L${bx + 12} ${by}L${bx + 8} ${by + 2}L${bx} ${by - 1}Z`} fill="#7c9dab" />
      <path d={`M${tx + 5} ${ty}L${bx + 5} ${by + 1}M${tx + 8} ${ty}L${bx + 8} ${by + 2}`} />
    </g>
  )
}

function Model() {
  return (
    <svg viewBox="362 222 1222 803" className="min-h-0 w-full grow" fill="none" aria-label="Machine Frame-For demo">
      <defs>
        <linearGradient id="shade" x1="0" y1="0" x2="1" y2="1">
          <stop offset="0" stopColor="#86a8b5" />
          <stop offset="1" stopColor="#728e9a" />
        </linearGradient>
        <linearGradient id="top" x1="0" y1="0" x2="1" y2="0">
          <stop offset="0" stopColor="#9dbecd" />
          <stop offset="1" stopColor="#94b8c8" />
        </linearGradient>
      </defs>
      <Lines data={floorLines} />
      <Leg top={[786, 294]} bottom={[746, 605]} />
      <Leg top={[1089, 420]} bottom={[1048, 736]} />
      <Leg top={[593, 372]} bottom={[551, 692]} />
      <Leg top={[895, 505]} bottom={[853, 823]} />

      <g stroke="#10181c" strokeWidth="1.200" strokeLinejoin="round">
        <path d="M797 279L795.500 294L632 367L614 360Z" fill="url(#shade)" />
        <path d="M797 279L795.500 294L1067 412L1086 403Z" fill="url(#shade)" />
        <path
          d="M794.500 268L1106 404L1110 406L904 497L589 359ZM797 279L614 360L901.500 486L1085 403Z"
          fill="url(#top)"
          fillRule="evenodd"
        />
        <path d="M589 360L904 497L903 511.500L586 375Z" fill="url(#shade)" />
        <path d="M904 497L1110 406L1108 421L903 511.500Z" fill="url(#shade)" />
        <path d="M794.500 268L797 279L795.500 294M590 359L614 360M901.500 486L904 497M1085 403L1106 404" />
        <path d="M593 358L904 494L1106 404M618 362L796 282L1083 405" strokeWidth=".9" />
      </g>
      <Lines data={topLines} />

      <g fill="#c98b4a" fillOpacity=".07" stroke="#b87a1c" strokeWidth="1.200">
        <path d="M558 692L572 615L617 596L607 669Z" />
        <path d="M558 692L570 619L632 646L622 719Z" />
        <path d="M558 692L607 669L671 697L622 719Z" />
      </g>
      <path d="M558 692L625 662" stroke="#7a7a30" strokeWidth="1.500" />
      <path d="M558 692L640 727" stroke="#b0503c" strokeWidth="1.500" />
      <path d="M562 690L570 600" stroke="#4a4aa0" />
      <path d="M566 596L571 580L575 596Z" stroke="#2020d8" />
      <path d="M618 659L624 657L633 657L626 664L619 666Z" fill="#12661a" />
      <circle cx="622" cy="662" r="4" fill="#18a020" />
      <path d="M645 648L655 648L648 655Z" fill="#6b3a2c" />
      <circle cx="647" cy="651" r="3.500" fill="#b56a1c" />
      <path d="M641 723L655 734L638 730Z" fill="#f01818" stroke="#8a1010" strokeWidth=".6" />
      <path d="M671 738L685 747L670 743Z" fill="#e8a020" stroke="#6a4808" strokeWidth=".8" />
      <g fontSize="15" textAnchor="middle" fill="#b06c14">
        <text x="667" y="648">Y</text>
        <text x="699" y="758">X</text>
      </g>
      <text x="456" y="709" fontSize="15" fill="#111">
        Default CSYS
      </text>

      <g strokeWidth="2">
        <path d="M459 937L467 880" stroke="#1414f0" />
        <path d="M459 937L496 920" stroke="#20c828" />
        <path d="M459 937L508 958" stroke="#f01414" />
      </g>
      <path d="M468 868L462 882L466 884L470 882Z" fill="#2424e0" stroke="#101090" strokeWidth=".6" />
      <path d="M506 917L497 916L493 921L497 924Z" fill="#127a1a" stroke="#0c4c10" strokeWidth=".6" />
      <path d="M519 963L508 955L505 960Z" fill="#e82020" stroke="#8a1010" strokeWidth=".6" />
      <g fontSize="15" textAnchor="middle">
        <text x="469" y="865" fill="#1414f0">Z</text>
        <text x="511" y="920" fill="#20c828">Y</text>
        <text x="527" y="973" fill="#f01414">X</text>
      </g>
    </svg>
  )
}

function Viewport() {
  return (
    <main className="flex min-w-0 grow flex-col pl-px">
      <DocTabs />
      <div className="flex min-h-0 grow flex-col border-x border-b border-[#b4bac4] bg-white">
        <ViewToolbar />
        <Model />
        <div className="pl-1 text-[15px] leading-5">1774.75mm</div>
      </div>
    </main>
  )
}

const drives = ['Ulubione', 'Developerka(B:)', '(C:)', 'Support(M:)', 'Obsluga_handlowa(N:)', 'Zdjecia_reklamy_grafika(O:)', 'Wspolne_pliki(Z:)']

const navButtons: { name: string; enabled?: boolean; art: ReactNode }[] = [
  { name: 'Wstecz', art: <path d="M0 8L7 3V6H16V10H7V13Z" fill="#aeb1b5" /> },
  { name: 'Dalej', art: <path d="M16 8L9 3V6H0V10H9V13Z" fill="#aeb1b5" /> },
  { name: 'W górę', art: <path d="M8 0L14 7H11V16H5V7H2Z" fill="#aeb1b5" /> },
  {
    name: 'Odśwież',
    enabled: true,
    art: (
      <>
        <path d="M1 9C1 4 6 3 11 4M15 7C15 12 10 13 5 12" stroke="#1f8fb8" strokeWidth="2" />
        <path d="M9 0L15 4L9 8ZM7 8L1 12L7 16Z" fill="#1f8fb8" />
      </>
    ),
  },
]

const browserTabs: ReactNode[] = [
  <g transform="translate(1 2) scale(1.400)">
    <Folder />
  </g>,
  <>
    <g transform="translate(1 2) scale(1.400)">
      <Folder />
    </g>
    <path d="M5 20L19 6" stroke="#155f82" strokeWidth="4" />
    <circle cx="5" cy="20" r="4" fill="#1c7ba3" stroke="#0c4f6e" />
    <circle cx="19" cy="6" r="4" fill="#1c7ba3" stroke="#0c4f6e" />
    <path d="M9 17L16 9" stroke="#9bd8ec" strokeWidth="2" />
  </>,
  <>
    <path d="M1 10L12 18L24 10V14L12 23L1 15Z" fill="#b4ccd6" stroke="#7a98a5" strokeWidth=".6" />
    <path d="M1 9L11 4L24 8L13 16Z" fill="#4ac8cf" stroke="#1f8f98" strokeWidth=".6" />
    <path d="M1 12L12 20L24 12" stroke="#fff" />
  </>,
  <>
    <g transform="translate(1 2) scale(1.400)">
      <Folder />
    </g>
    <circle cx="17" cy="15" r="6.500" fill="#2a8fb8" stroke="#345" strokeWidth=".6" />
    <path d="M11 15H23C22 23 12 23 11 15Z" fill="#f08a2a" />
    <circle cx="16" cy="12" r="2.500" fill="#fff" opacity=".8" />
  </>,
  <>
    <Blob x={1} y={2} />
    <path d="M8 16H13V22H8Z" fill="#e82020" />
    <path d="M13 16H17V22H13Z" fill="#5aa03a" />
    <path d="M17 16H22V22H17Z" fill="#2a4fa0" />
  </>,
]

function SectionTitle({ children }: { children: ReactNode }) {
  return (
    <h3 className="flex h-6 items-center gap-2 border border-[#b4bac4] bg-[#fbfbfc] pl-1 font-bold">
      <Caret className="w-2.5" />
      {children}
    </h3>
  )
}

function FileBrowser() {
  return (
    <aside className="flex w-[335px] shrink-0 flex-col pl-0.5">
      <div className="flex h-[23px] items-center justify-between pt-0.5 pr-2 pl-1">
        <h2>Przeglądarka plików</h2>
        <PanelControls />
      </div>
      <div className="flex min-h-0 grow">
        <div className="flex min-w-0 grow flex-col border border-[#b4bac4] px-px">
          <div className="flex h-[30px] gap-1 pt-0.5">
            {navButtons.map((b) => (
              <button
                key={b.name}
                aria-label={b.name}
                disabled={!b.enabled}
                className={clsx(
                  'flex h-[25px] w-[29px] items-center justify-center border',
                  b.enabled ? 'border-[#b4bac4] bg-white' : 'border-[#d5d8dc] bg-[#eeeff1]',
                )}
              >
                <Icon>{b.art}</Icon>
              </button>
            ))}
          </div>
          <div className={clsx('min-h-[126px] grow border border-[#b4bac4]', stripes)}>
            {drives.map((d, i) => (
              <div key={d} className="flex h-[18px] items-center pl-0.5">
                <Icon className="size-2.5">
                  <path d="M4 1L11 8L4 15" stroke="#999" strokeWidth="3" />
                </Icon>
                <Icon className="mr-[3px] ml-1.5 size-4">
                  {i === 0 ? (
                    <>
                      <path d="M8 1L10 6L16 6L11 10L13 15L8 12L3 15L5 10L0 6L6 6Z" fill="#2aa5cf" />
                      <path d="M6 12H9V16H6Z" fill="#e03030" />
                      <path d="M9 12H12V16H9Z" fill="#39a03a" />
                      <path d="M12 12H15V16H12Z" fill="#2a4fc0" />
                    </>
                  ) : (
                    <Folder />
                  )}
                </Icon>
                {d}
              </div>
            ))}
          </div>
          <div className="mt-2 flex h-[361px]">
            <div className="flex min-w-0 grow flex-col">
              <SectionTitle>Szukaj</SectionTitle>
              <div className="flex h-8 gap-1 border-x border-b border-[#b4bac4] bg-[#dfe4ec] px-0.5 py-[3px]">
                <Combo label="Szukaj" options={['Szukaj...']} muted className="w-[197px]" />
                <button aria-label="Wyszukaj" className="flex grow items-center justify-center border border-[#b4bac4] bg-white">
                  <Icon>
                    <Lens />
                  </Icon>
                </button>
                <button aria-label="Narzędzia" className="flex grow items-center justify-center border border-[#b4bac4] bg-white">
                  <Icon>
                    <path d="M1 1L8 8" stroke="#999" strokeWidth="3" />
                    <path d="M7 7C12 6 13 9 15 12M7 7C6 12 9 13 11 15" stroke="#d8202a" strokeWidth="2" />
                  </Icon>
                </button>
              </div>
              <div className="h-0.5" />
              <SectionTitle>Lista plików</SectionTitle>
              <div className="flex h-8 gap-1 border-x border-[#b4bac4] bg-[#dfe4ec] px-0.5 py-[3px]">
                <button aria-label="Układ listy" className="flex w-11 items-center justify-center gap-2 border border-[#b4bac4] bg-white">
                  <Icon>
                    <path d="M1 1H5V4H1Z" fill="#f5b02d" />
                    <path d="M10 1H14V4H10ZM1 6H5V10H1ZM10 12H14V15H10Z" fill="#2a8fb8" />
                    <path d="M10 6H14V10H10Z" fill="#e07a30" />
                    <path d="M1 12H5V15H1Z" fill="#c84040" />
                    <path d="M6 3H9M6 8H9M6 14H9M15 3H16M15 8H16M15 14H16" stroke="#999" />
                  </Icon>
                  <Caret />
                </button>
                <Combo label="Typ plików" options={['Wszystkie wspierane pliki']} className="grow" />
              </div>
              <div className="grow border border-[#b4bac4] bg-white" />
              <label className="flex h-7 items-center gap-1 border-x border-[#b4bac4] bg-[#dfe4ec] pt-[3px] pr-0.5 pl-0.5 whitespace-nowrap">
                Lista obiektów
                <Combo label="Lista obiektów" options={['']} className="h-full min-w-0 grow border-b-0" />
              </label>
            </div>
            <div className="ml-0.5 flex w-3.5 flex-col items-center bg-[#d9dee5]">
              <svg viewBox="0 0 10 6" className="my-[5px] h-1.5 w-2.5">
                <path d="M0 6H10L5 0Z" fill="#333" />
              </svg>
              <div className="flex h-[303px] w-full flex-col items-center justify-center gap-px border border-[#7e8aa0] bg-[#e9edf7]">
                {[0, 1, 2, 3].map((n) => (
                  <div key={n} className="h-px w-2 bg-gray-500" />
                ))}
              </div>
              <svg viewBox="0 0 10 6" className="mt-auto mb-1.5 h-1.5 w-2.5">
                <path d="M0 0H10L5 6Z" fill="#333" />
              </svg>
            </div>
          </div>
        </div>
        <div className="pr-0.5">
          <SideTabs items={browserTabs} active={0} side="right" />
        </div>
      </div>
      <div className="flex h-[22px] border-t border-[#999ea6]">
        <button className="w-[129px] border-x border-b border-[#b4bac4] bg-white">Przeglądarka plików</button>
        <button className="px-3 pb-0.5">Dane wyjściowe</button>
      </div>
    </aside>
  )
}

function StatusBar() {
  return (
    <footer className="flex h-[33px] items-start border-b border-[#8a8a8a] pt-1">
      <div className="grow pt-0.5 pl-2 leading-5">Wybierz komendę lub elementy.</div>
      <div className="h-6 w-px bg-gray-500" />
      <div className="ml-2.5 flex gap-2">
        <button aria-label="Menadżer" className="flex h-[22px] w-[23px] items-center justify-center border border-[#d9a63c] bg-[#fcdb76]">
          <Icon>
            <path d="M1 2H15V15H1Z" fill="#fff" stroke="#4a78b0" />
            <path d="M1 2H15V4H1Z" fill="#4a78b0" />
            <path d="M4 5V14" stroke="#4a78b0" strokeDasharray="1 1" />
            <path d="M7 6H13M10 6V14" stroke="#a03030" strokeWidth="2" />
          </Icon>
        </button>
        <button aria-label="Ekran" className="flex h-[22px] w-[23px] items-center justify-center border border-[#d9a63c] bg-[#fcdb76]">
          <Icon>
            <path d="M0 2H16V12H0Z" fill="#2a7f9a" />
            <path d="M1 3H15V10H1Z" fill="#45c3dc" />
            <path d="M5 12H11V15H5Z" fill="#444" />
          </Icon>
        </button>
        <button aria-label="Komunikaty" className="flex h-[22px] w-[23px] items-center justify-center">
          <Icon>
            <path d="M1 1H15V15H1Z" fill="#f4f8fc" stroke="#4a78b0" />
            <path d="M1 1H15V4H1Z" fill="#7aa8d8" />
            <path d="M3 7H13M3 10H13M3 13H9" stroke="#8a98a8" />
          </Icon>
        </button>
      </div>
      <input aria-label="Wiersz polecenia" className="mr-6 ml-2 h-[22px] w-[350px] border border-[#b4bac4] bg-white px-1 outline-none" />
    </footer>
  )
}

function App() {
  return (
    <div className="flex h-screen flex-col overflow-hidden bg-[#e7e9ec] font-['Noto_Sans','Open_Sans',sans-serif] text-[11px] leading-4 text-[#1e1e1e]">
      <MenuBar />
      <RibbonTabs />
      <Ribbon />
      <SelectionToolbar />
      <div className="flex min-h-0 grow">
        <Manager />
        <Viewport />
        <FileBrowser />
      </div>
      <StatusBar />
    </div>
  )
}

export default App
